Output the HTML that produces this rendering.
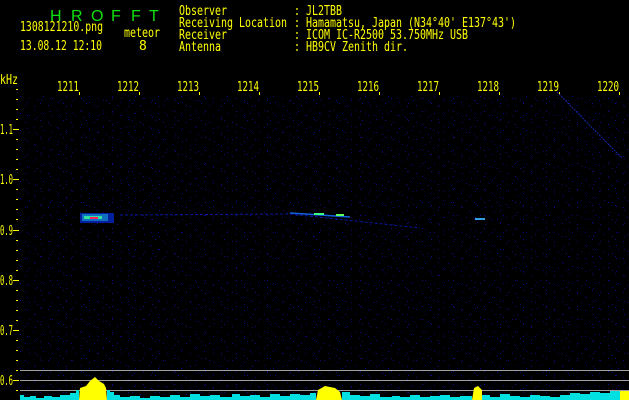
<!DOCTYPE html>
<html><head><meta charset="utf-8"><style>
html,body{margin:0;padding:0;background:#000;width:629px;height:400px;overflow:hidden}
svg{display:block}
text{font-family:"DejaVu Sans Mono","Liberation Mono",monospace;font-size:13px;fill:#ffff00}
.g{fill:#10e010;font-size:16px;font-family:"Liberation Sans",sans-serif}
</style></head><body>
<svg width="629" height="400" xmlns="http://www.w3.org/2000/svg">
<defs>
<pattern id="n" width="23" height="17" patternUnits="userSpaceOnUse">
<rect x="2" y="3" width="1" height="1" fill="#0c0c88"/>
<rect x="11" y="8" width="1" height="1" fill="#08086a"/>
<rect x="17" y="1" width="1" height="1" fill="#0e0e80"/>
<rect x="6" y="13" width="1" height="1" fill="#0a0a70"/>
<rect x="20" y="11" width="1" height="1" fill="#06068a"/>
<rect x="14" y="15" width="1" height="1" fill="#0a0a7a"/>
</pattern>
<pattern id="n2" width="31" height="13" patternUnits="userSpaceOnUse">
<rect x="4" y="2" width="1" height="1" fill="#0a0a78"/>
<rect x="19" y="7" width="1" height="1" fill="#0e0e90"/>
<rect x="27" y="11" width="1" height="1" fill="#060680"/>
<rect x="10" y="9" width="1" height="1" fill="#080870"/>
</pattern>
</defs>
<rect x="20" y="95" width="609" height="305" fill="url(#n)"/>
<rect x="20" y="95" width="609" height="305" fill="url(#n2)"/>
<text x="50" y="21" class="g">H</text>
<text x="71" y="21" class="g">R</text>
<text x="91" y="21" class="g">O</text>
<text x="111" y="21" class="g">F</text>
<text x="131" y="21" class="g">F</text>
<text x="149" y="21" class="g">T</text>
<text x="20" y="31" textLength="83" lengthAdjust="spacingAndGlyphs">1308121210.png</text>
<text x="124" y="37" textLength="36" lengthAdjust="spacingAndGlyphs">meteor</text>
<text x="20" y="50" textLength="82" lengthAdjust="spacingAndGlyphs">13.08.12 12:10</text>
<text x="139" y="50">8</text>
<text x="179" y="15" textLength="48" lengthAdjust="spacingAndGlyphs">Observer</text>
<text x="179" y="27" textLength="108" lengthAdjust="spacingAndGlyphs">Receiving Location</text>
<text x="179" y="39" textLength="48" lengthAdjust="spacingAndGlyphs">Receiver</text>
<text x="179" y="51" textLength="42" lengthAdjust="spacingAndGlyphs">Antenna</text>
<text x="294" y="15" textLength="48" lengthAdjust="spacingAndGlyphs">: JL2TBB</text>
<text x="294" y="27" textLength="222" lengthAdjust="spacingAndGlyphs">: Hamamatsu, Japan (N34°40' E137°43')</text>
<text x="294" y="39" textLength="174" lengthAdjust="spacingAndGlyphs">: ICOM IC-R2500 53.750MHz USB</text>
<text x="294" y="51" textLength="114" lengthAdjust="spacingAndGlyphs">: HB9CV Zenith dir.</text>
<text x="0" y="84" textLength="18" lengthAdjust="spacingAndGlyphs">kHz</text>
<g>
<text x="57" y="91" textLength="22" lengthAdjust="spacingAndGlyphs">1211</text><text x="117" y="91" textLength="22" lengthAdjust="spacingAndGlyphs">1212</text><text x="177" y="91" textLength="22" lengthAdjust="spacingAndGlyphs">1213</text>
<text x="237" y="91" textLength="22" lengthAdjust="spacingAndGlyphs">1214</text><text x="297" y="91" textLength="22" lengthAdjust="spacingAndGlyphs">1215</text><text x="357" y="91" textLength="22" lengthAdjust="spacingAndGlyphs">1216</text>
<text x="417" y="91" textLength="22" lengthAdjust="spacingAndGlyphs">1217</text><text x="477" y="91" textLength="22" lengthAdjust="spacingAndGlyphs">1218</text><text x="537" y="91" textLength="22" lengthAdjust="spacingAndGlyphs">1219</text>
<text x="597" y="91" textLength="22" lengthAdjust="spacingAndGlyphs">1220</text>
</g>
<g fill="#ffff00">
<rect x="79" y="92" width="1" height="3"/><rect x="139" y="92" width="1" height="3"/><rect x="199" y="92" width="1" height="3"/><rect x="259" y="92" width="1" height="3"/><rect x="319" y="92" width="1" height="3"/><rect x="379" y="92" width="1" height="3"/><rect x="439" y="92" width="1" height="3"/><rect x="499" y="92" width="1" height="3"/><rect x="559" y="92" width="1" height="3"/><rect x="619" y="92" width="1" height="3"/>
<rect x="16" y="89" width="2" height="1"/>
<rect x="16" y="99" width="2" height="1"/><rect x="16" y="109" width="2" height="1"/><rect x="16" y="119" width="2" height="1"/><rect x="13" y="129" width="6" height="1"/><rect x="16" y="139" width="2" height="1"/><rect x="16" y="149" width="2" height="1"/><rect x="16" y="159" width="2" height="1"/><rect x="16" y="169" width="2" height="1"/><rect x="13" y="179" width="6" height="1"/><rect x="16" y="189" width="2" height="1"/><rect x="16" y="199" width="2" height="1"/><rect x="16" y="209" width="2" height="1"/><rect x="16" y="219" width="2" height="1"/><rect x="13" y="230" width="6" height="1"/><rect x="16" y="240" width="2" height="1"/><rect x="16" y="250" width="2" height="1"/><rect x="16" y="260" width="2" height="1"/><rect x="16" y="270" width="2" height="1"/><rect x="13" y="280" width="6" height="1"/><rect x="16" y="290" width="2" height="1"/><rect x="16" y="300" width="2" height="1"/><rect x="16" y="310" width="2" height="1"/><rect x="16" y="320" width="2" height="1"/><rect x="13" y="330" width="6" height="1"/><rect x="16" y="340" width="2" height="1"/><rect x="16" y="350" width="2" height="1"/><rect x="16" y="360" width="2" height="1"/><rect x="16" y="370" width="2" height="1"/><rect x="13" y="380" width="6" height="1"/><rect x="16" y="390" width="2" height="1"/>
</g>
<g>
<text x="0" y="134" textLength="13" lengthAdjust="spacingAndGlyphs">1.1</text><text x="0" y="184" textLength="13" lengthAdjust="spacingAndGlyphs">1.0</text><text x="0" y="235" textLength="13" lengthAdjust="spacingAndGlyphs">0.9</text>
<text x="0" y="285" textLength="13" lengthAdjust="spacingAndGlyphs">0.8</text><text x="0" y="335" textLength="13" lengthAdjust="spacingAndGlyphs">0.7</text><text x="0" y="385" textLength="13" lengthAdjust="spacingAndGlyphs">0.6</text>
</g>
<rect x="20" y="370" width="609" height="1" fill="#a0a0a0"/>
<rect x="20" y="380" width="609" height="1" fill="#a0a0a0"/>
<rect x="20" y="390" width="609" height="1" fill="#a0a0a0"/>
<path d="M557 92 L622 158" stroke="#1828b0" stroke-width="1" fill="none" stroke-dasharray="2 1"/>
<path d="M120 215 L290 214 L420 228" stroke="#0a18a0" stroke-width="1" fill="none" stroke-dasharray="3 2"/>
<path d="M290 213 L350 217" stroke="#1060e0" stroke-width="1.5" fill="none"/>
<rect x="314" y="213" width="10" height="2" fill="#40ff80"/>
<rect x="336" y="214" width="8" height="2" fill="#60ff60"/>
<rect x="80" y="213" width="34" height="10" fill="#0020a0"/>
<rect x="82" y="214" width="26" height="7" fill="#1070c0"/>
<rect x="84" y="216" width="18" height="3" fill="#30e0a0"/>
<rect x="90" y="217" width="8" height="2" fill="#ff2060"/>
<rect x="475" y="218" width="10" height="2" fill="#30a0e0"/>
<path d="M20 400 V395 H24 V397 H30 V396 H36 V398 H44 V396 H52 V397 H60 V395 H70 V393 H76 V390 H79 V400 Z" fill="#00e0e0"/>
<path d="M107 400 V390 H110 V392 H114 V395 H120 V397 H130 V396 H140 V398 H150 V396 H160 V397 H170 V395 H180 V397 H190 V394 H200 V396 H210 V395 H220 V397 H232 V394 H240 V396 H250 V395 H260 V397 H270 V394 H280 V396 H290 V394 H300 V395 H310 V393 H316 V400 Z" fill="#00e0e0"/>
<path d="M342 400 V392 H350 V395 H360 V396 H370 V394 H380 V397 H392 V396 H400 V397 H410 V395 H420 V397 H430 V396 H440 V395 H450 V397 H460 V396 H472 V400 Z" fill="#00e0e0"/>
<path d="M482 400 V395 H490 V397 H500 V394 H510 V396 H520 V397 H530 V395 H540 V396 H550 V397 H560 V395 H570 V393 H580 V394 H590 V392 H600 V393 H610 V391 H620 V400 Z" fill="#00e0e0"/>
<path d="M79 400 L80 388 L86 386 L90 381 L95 377 L99 381 L104 384 L106 388 L107 400 Z" fill="#ffff00"/>
<path d="M316 400 L318 390 L325 386 L335 388 L340 392 L342 400 Z" fill="#ffff00"/>
<path d="M472 400 L474 388 L478 386 L482 390 L482 400 Z" fill="#ffff00"/>
<rect x="620" y="391" width="9" height="9" fill="#ffff00"/>
</svg>
</body></html>
